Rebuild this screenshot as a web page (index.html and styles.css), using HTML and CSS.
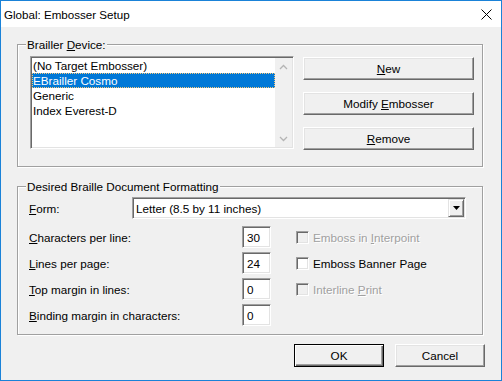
FILE: index.html
```html
<!DOCTYPE html>
<html lang="en">
<head>
    <meta charset="UTF-8">
    <title>Global: Embosser Setup</title>
    <link rel="stylesheet" href="styles.css">
</head>
<body>
<div class="dialog">
    <div class="titlebar">
        <span class="title">Global: Embosser Setup</span>
        <svg class="close" width="11" height="11" viewBox="0 0 11 11">
            <path d="M0.5 0.5 L10.5 10.5 M10.5 0.5 L0.5 10.5" stroke="#000" stroke-width="1" fill="none"/>
        </svg>
    </div>
    <div class="client">
        <div class="group deviceGroup">
            <span class="legend">Brailler <u>D</u>evice:</span>
            <div class="listbox sunken">
                <ul class="items">
                    <li>(No Target Embosser)</li>
                    <li class="selected">EBrailler Cosmo</li>
                    <li>Generic</li>
                    <li>Index Everest-D</li>
                </ul>
                <div class="vscroll">
                    <svg width="9" height="6" viewBox="0 0 9 6"><path d="M1 5 L4.5 1.5 L8 5" stroke="#b4b4b4" stroke-width="1.3" fill="none"/></svg>
                    <svg width="9" height="6" viewBox="0 0 9 6"><path d="M1 1 L4.5 4.5 L8 1" stroke="#b4b4b4" stroke-width="1.3" fill="none"/></svg>
                </div>
            </div>
            <div class="btnCol">
                <button class="btn wide"><u>N</u>ew</button>
                <button class="btn wide">Modify <u>E</u>mbosser</button>
                <button class="btn wide"><u>R</u>emove</button>
            </div>
        </div>

        <div class="group formatGroup">
            <span class="legend">Desired Braille Document Formatting</span>
            <div class="formRow">
                <label class="formLabel"><u>F</u>orm:</label>
                <div class="combo sunken">
                    <span class="comboText">Letter (8.5 by 11 inches)</span>
                    <span class="dropBtn">
                        <svg width="7" height="4" viewBox="0 0 7 4"><path d="M0 0 H7 L3.5 4 Z" fill="#000"/></svg>
                    </span>
                </div>
            </div>
            <div class="fields">
                <label><u>C</u>haracters per line:</label>
                <div class="numBox sunken">30</div>
                <div class="check disabled"><span class="box"></span><span>Emboss in <u>I</u>nterpoint</span></div>

                <label><u>L</u>ines per page:</label>
                <div class="numBox sunken">24</div>
                <div class="check"><span class="box"></span><span>Emboss Banner Page</span></div>

                <label><u>T</u>op margin in lines:</label>
                <div class="numBox sunken">0</div>
                <div class="check disabled"><span class="box"></span><span>Interline <u>P</u>rint</span></div>

                <label><u>B</u>inding margin in characters:</label>
                <div class="numBox sunken">0</div>
                <div></div>
            </div>
        </div>

        <div class="actions">
            <button class="btn default">OK</button>
            <button class="btn">Cancel</button>
        </div>
    </div>
</div>
</body>
</html>
```

FILE: styles.css
```css
html, body {
    margin: 0;
    padding: 0;
    background: #f0f0f0;
}

.dialog {
    width: 502px;
    height: 381px;
    box-sizing: border-box;
    border: 1px solid #1a82d8;
    display: flex;
    flex-direction: column;
    font-family: "Liberation Sans", Arial, sans-serif;
    font-size: 11.7px;
    color: #000;
}

/* title bar */
.titlebar {
    height: 26px;
    background: #fff;
    display: flex;
    align-items: center;
    justify-content: space-between;
    flex-shrink: 0;
}

.titlebar .title {
    padding-left: 3px;
    font-size: 11.6px;
}

.titlebar .close {
    margin-right: 9px;
}

.client {
    flex: 1;
    background: #f0f0f0;
    padding: 17px 0 0 16px;
}

/* 3d edges */
.sunken {
    box-sizing: border-box;
    border: 1px solid;
    border-color: #a0a0a0 #fff #fff #a0a0a0;
    box-shadow: inset 1px 1px 0 #696969, inset -1px -1px 0 #e3e3e3;
    padding: 1px;
    background: #fff;
}

.btn {
    box-sizing: border-box;
    font: inherit;
    color: #000;
    background: #f0f0f0;
    border: 1px solid;
    border-color: #fff #696969 #696969 #fff;
    box-shadow: inset -1px -1px 0 #a0a0a0, inset 1px 1px 0 #e3e3e3;
    height: 23px;
    padding: 0;
    margin: 0;
}

.btn.default {
    border-color: #000;
    box-shadow: inset 1px 1px 0 #fff, inset -1px -1px 0 #696969, inset -2px -2px 0 #a0a0a0;
}

/* group boxes */
.group {
    position: relative;
    box-sizing: border-box;
    width: 466px;
    border: 1px solid #a0a0a0;
    box-shadow: inset 1px 1px 0 #fff, 1px 1px 0 #fff;
}

.group .legend {
    position: absolute;
    top: -8px;
    left: 8px;
    padding: 0 1px;
    background: #f0f0f0;
    line-height: 15px;
}

.deviceGroup {
    height: 123px;
    padding: 11px 0 0 12px;
    display: flex;
    align-items: flex-start;
    gap: 9px;
}

/* listbox */
.listbox {
    width: 264px;
    height: 93px;
    display: flex;
}

.listbox .items {
    list-style: none;
    margin: 0;
    padding: 0;
    flex: 1;
}

.listbox .items li {
    height: 15px;
    line-height: 15px;
    padding-left: 1px;
}

.listbox .items li.selected {
    background: #0078d7;
    color: #fff;
    outline: 1px dotted #f7c87a;
    outline-offset: -1px;
}

.vscroll {
    width: 17px;
    background: #f0f0f0;
    display: flex;
    flex-direction: column;
    justify-content: space-between;
    align-items: center;
    padding: 6px 0 5px;
    box-sizing: border-box;
}

.btnCol {
    display: flex;
    flex-direction: column;
    gap: 12px;
    margin-top: 1px;
}

.btn.wide {
    width: 171px;
}

/* formatting group */
.formatGroup {
    margin-top: 19px;
    height: 149px;
    padding: 10px 0 0 11px;
}

.formRow {
    display: flex;
    align-items: center;
}

.formLabel {
    width: 103px;
}

.combo {
    width: 334px;
    height: 22px;
    display: flex;
    align-items: center;
    justify-content: space-between;
}

.comboText {
    padding-left: 2px;
}

.dropBtn {
    box-sizing: border-box;
    width: 16px;
    height: 18px;
    background: #f0f0f0;
    border: 1px solid;
    border-color: #e3e3e3 #696969 #696969 #e3e3e3;
    box-shadow: inset 1px 1px 0 #fff, inset -1px -1px 0 #a0a0a0;
    display: flex;
    align-items: center;
    justify-content: center;
}

.fields {
    margin-top: 7px;
    display: grid;
    grid-template-columns: 213px 29px 1fr;
    grid-auto-rows: 22px;
    row-gap: 4px;
    align-items: center;
}

.numBox {
    height: 22px;
    padding: 2px 0 0 4px;
    line-height: 17px;
}

.check {
    display: flex;
    align-items: center;
    margin-left: 25px;
}

.check .box {
    box-sizing: border-box;
    width: 13px;
    height: 13px;
    margin-right: 4px;
    background: #fff;
    border: 1px solid;
    border-color: #a0a0a0 #fff #fff #a0a0a0;
    box-shadow: inset 1px 1px 0 #696969, inset -1px -1px 0 #e3e3e3;
}

.check.disabled {
    color: #a0a0a0;
    text-shadow: 1px 1px 0 #fff;
}

.check.disabled .box {
    background: #f0f0f0;
}

/* ok / cancel */
.actions {
    display: flex;
    justify-content: flex-end;
    gap: 11px;
    margin-top: 9px;
    padding-right: 16px;
}

.actions .btn {
    width: 90px;
}
```
